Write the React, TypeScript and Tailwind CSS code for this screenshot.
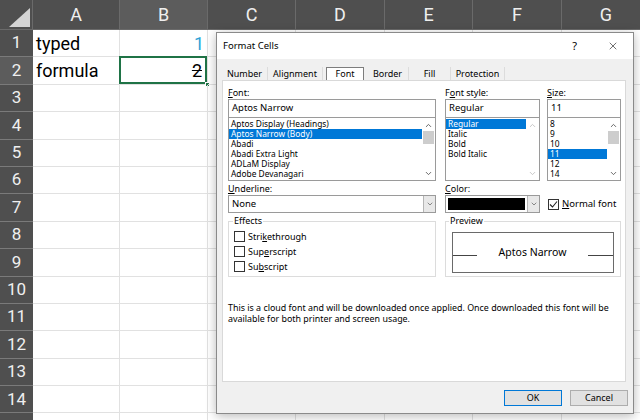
import { ChevronDown, ChevronUp, X } from "lucide-react";

const columns = [
  { letter: "A", width: "w-[87px]" },
  { letter: "B", width: "w-[88px]" },
  { letter: "C", width: "w-[88px]" },
  { letter: "D", width: "w-[89px]" },
  { letter: "E", width: "w-[88px]" },
  { letter: "F", width: "w-[89px]" },
  { letter: "G", width: "w-[89px]" },
];

const rows = Array.from({ length: 15 }, (_, i) => i + 1);

function Sheet() {
  return (
    <div className="flex flex-col font-['Roboto',sans-serif]">
      <div className="flex h-[30px] bg-[#4f4f4f]">
        <div className="relative w-[33px] shrink-0 border-r border-b border-[#6a6a6a]">
          <svg className="absolute left-[9px] top-[8px]" width="21" height="19" viewBox="0 0 21 19">
            <polygon points="21,0 21,19 0,19" fill="#d4d4d4" />
          </svg>
        </div>
        {columns.map((c) => (
          <div
            key={c.letter}
            className={`${c.width} flex shrink-0 items-center justify-center border-r border-b border-[#6a6a6a] text-[18px] text-[#efefef] ${c.letter === "B" ? "bg-[#5c5c5c]" : ""}`}
          >
            {c.letter}
          </div>
        ))}
      </div>
      {rows.map((r) => (
        <div key={r} className="flex h-[27.4px]">
          <div
            className={`flex w-[33px] shrink-0 items-center justify-center border-b border-[#7a7a7a] text-[17px] text-[#efefef] ${r === 2 ? "bg-[#5c5c5c]" : "bg-[#4f4f4f]"}`}
          >
            {r < 15 ? r : ""}
          </div>
          {columns.map((c) => (
            <div
              key={c.letter}
              className={`${c.width} relative flex shrink-0 items-center border-r border-b border-[#e1e1e1] px-[3px] text-[18px] text-black`}
            >
              {r === 1 && c.letter === "A" && <span>typed</span>}
              {r === 2 && c.letter === "A" && <span>formula</span>}
              {r === 1 && c.letter === "B" && <span className="ml-auto text-[#2ea3d6]">1</span>}
              {r === 2 && c.letter === "B" && (
                <>
                  <span className="ml-auto pr-[2px] line-through">2</span>
                  <div className="absolute -left-[1px] -top-[1px] h-[calc(100%+1px)] w-[calc(100%+1px)] border-2 border-[#1f7346]" />
                  <div className="absolute -bottom-[3px] -right-[3px] h-[5px] w-[5px] border border-white bg-[#1f7346]" />
                </>
              )}
            </div>
          ))}
        </div>
      ))}
    </div>
  );
}

function U({ children }: { children: string }) {
  return <span className="underline underline-offset-1">{children}</span>;
}

function Scrollbar({ disabled }: { disabled?: boolean }) {
  const tone = disabled ? "text-[#c4c4c4]" : "text-[#606060]";
  return (
    <div className="flex w-[13px] shrink-0 flex-col items-center bg-white">
      <ChevronUp className={`mt-[3px] h-[9px] w-[9px] ${tone}`} strokeWidth={2.5} />
      {!disabled && <div className="mt-[1px] h-[13px] w-[11px] bg-[#cdcdcd]" />}
      <ChevronDown className={`mb-[2px] mt-auto h-[9px] w-[9px] ${tone}`} strokeWidth={2.5} />
    </div>
  );
}

function ListBox({
  items,
  selected,
  scroll,
  disabled,
}: {
  items: string[];
  selected: string;
  scroll: boolean;
  disabled?: boolean;
}) {
  return (
    <div className="flex h-[63px] border border-t-0 border-[#9a9a9a] bg-white">
      <div className="min-w-0 flex-1 pt-[1px]">
        {items.map((item) => (
          <div
            key={item}
            className={`h-[10px] whitespace-nowrap pl-[2px] text-[8.4px] leading-[10px] ${item === selected ? "bg-[#0078d7] text-white" : ""}`}
          >
            {item}
          </div>
        ))}
      </div>
      {scroll && <Scrollbar disabled={disabled} />}
    </div>
  );
}

function TextBox({ value }: { value: string }) {
  return (
    <div className="flex h-[19px] items-center border border-[#9a9a9a] bg-white pl-[3px] text-[9.5px]">
      {value}
    </div>
  );
}

function CheckBox({ checked }: { checked?: boolean }) {
  return (
    <div className="flex h-[11px] w-[11px] shrink-0 items-center justify-center border border-[#333] bg-white">
      {checked && (
        <svg width="9" height="9" viewBox="0 0 9 9">
          <path d="M1 4.5 L3.5 7 L8 1.5" fill="none" stroke="#222" strokeWidth="1.1" />
        </svg>
      )}
    </div>
  );
}

function DropButton() {
  return (
    <div className="flex w-[12px] shrink-0 items-center justify-center border-l border-[#b5b5b5] bg-[#e8e8e8]">
      <ChevronDown className="h-[8px] w-[8px] text-[#555]" strokeWidth={2} />
    </div>
  );
}

const tabs = [
  { name: "Number", width: "w-[46px]" },
  { name: "Alignment", width: "w-[55px]" },
  { name: "Font", width: "w-[44px]" },
  { name: "Border", width: "w-[42px]" },
  { name: "Fill", width: "w-[42px]" },
  { name: "Protection", width: "w-[54px]" },
];

function FormatCellsDialog() {
  return (
    <div className="absolute left-[216px] top-[32px] flex h-[382px] w-[418px] flex-col border border-[#8a8a8a] bg-[#f0f0f0] font-['Noto_Sans',sans-serif] text-[9px] text-black shadow-[0_2px_10px_rgba(0,0,0,0.28)]">
      <div className="flex h-[26px] shrink-0 items-center bg-white pl-[6px] pr-[14px]">
        <span className="text-[9.5px]">Format Cells</span>
        <span className="ml-auto mr-[30px] text-[11px]">?</span>
        <X className="h-[12px] w-[12px] text-[#222]" strokeWidth={1.3} />
      </div>

      <div className="ml-[5px] mt-[7px] flex h-[14px] w-[404px] items-end">
        {tabs.map((t) =>
          t.name === "Font" ? (
            <div key={t.name} className={`${t.width} flex h-[14px] items-end justify-center`}>
              <div className="-mb-[1px] flex h-[14px] w-[38px] items-center justify-center border border-[#7d7d7d] bg-white pb-[1px]">
                {t.name}
              </div>
            </div>
          ) : (
            <div
              key={t.name}
              className={`${t.width} flex h-[13px] items-center justify-center border-r border-[#dcdcdc] pt-[1px]`}
            >
              {t.name}
            </div>
          ),
        )}
      </div>

      <div className="ml-[5px] flex h-[302px] w-[404px] flex-col border border-[#d9d9d9] bg-white pl-[5px] pt-[6px]">
        <div className="flex">
          <div className="w-[208px]">
            <div className="h-[12px] leading-[11px]">
              <U>F</U>ont:
            </div>
            <TextBox value="Aptos Narrow" />
            <ListBox
              items={[
                "Aptos Display (Headings)",
                "Aptos Narrow (Body)",
                "Abadi",
                "Abadi Extra Light",
                "ADLaM Display",
                "Adobe Devanagari",
              ]}
              selected="Aptos Narrow (Body)"
              scroll
            />
          </div>
          <div className="ml-[9px] w-[95px]">
            <div className="h-[12px] leading-[11px]">
              F<U>o</U>nt style:
            </div>
            <TextBox value="Regular" />
            <ListBox
              items={["Regular", "Italic", "Bold", "Bold Italic"]}
              selected="Regular"
              scroll
              disabled
            />
          </div>
          <div className="ml-[7px] w-[74px]">
            <div className="h-[12px] leading-[11px]">
              <U>S</U>ize:
            </div>
            <TextBox value="11" />
            <ListBox items={["8", "9", "10", "11", "12", "14"]} selected="11" scroll />
          </div>
        </div>

        <div className="mt-[2px] flex items-end">
          <div className="w-[208px]">
            <div className="h-[12px] leading-[11px]">
              <U>U</U>nderline:
            </div>
            <div className="flex h-[18px] border border-[#9a9a9a] bg-white">
              <div className="flex flex-1 items-center pl-[3px] text-[9.5px]">None</div>
              <DropButton />
            </div>
          </div>
          <div className="ml-[9px] w-[95px]">
            <div className="h-[12px] leading-[11px]">
              <U>C</U>olor:
            </div>
            <div className="flex h-[18px] border border-[#9a9a9a] bg-white">
              <div className="flex flex-1 items-center pl-[2px] pr-[2px]">
                <div className="h-[12px] w-full bg-black" />
              </div>
              <DropButton />
            </div>
          </div>
          <div className="ml-[8px] flex h-[18px] items-center gap-[3px] text-[9.5px]">
            <CheckBox checked />
            <span>
              <U>N</U>ormal font
            </span>
          </div>
        </div>

        <div className="mt-[8px] flex">
          <div className="relative h-[56px] w-[208px] border border-[#dcdcdc] pl-[5px] pt-[7px]">
            <span className="absolute -top-[6px] left-[4px] bg-white px-[1px] leading-[10px]">Effects</span>
            <div className="flex h-[15px] items-center gap-[3px]">
              <CheckBox />
              <span>
                Stri<U>k</U>ethrough
              </span>
            </div>
            <div className="flex h-[15px] items-center gap-[3px]">
              <CheckBox />
              <span>
                Sup<U>e</U>rscript
              </span>
            </div>
            <div className="flex h-[15px] items-center gap-[3px]">
              <CheckBox />
              <span>
                Su<U>b</U>script
              </span>
            </div>
          </div>
          <div className="relative ml-[9px] h-[56px] w-[176px] border border-[#dcdcdc] px-[6px] pt-[10px]">
            <span className="absolute -top-[6px] left-[3px] bg-white px-[1px] leading-[10px]">Preview</span>
            <div className="flex h-[41px] items-center border border-[#6a6a6a]">
              <div className="mt-[6px] h-px w-[24px] bg-[#444]" />
              <span className="flex-1 text-center text-[10.5px] leading-[11px]">Aptos Narrow</span>
              <div className="mt-[6px] h-px w-[25px] bg-[#444]" />
            </div>
          </div>
        </div>

        <p className="mt-[25px] text-[8.9px] leading-[11px]">
          This is a cloud font and will be downloaded once applied. Once downloaded this font will be
          <br />
          available for both printer and screen usage.
        </p>
      </div>

      <div className="mr-[5px] mt-[8px] flex justify-end gap-[8px]">
        <div className="flex h-[16px] w-[58px] items-center justify-center border border-[#0078d7] bg-[#e1e1e1]">
          OK
        </div>
        <div className="flex h-[16px] w-[58px] items-center justify-center border border-[#adadad] bg-[#e1e1e1]">
          Cancel
        </div>
      </div>
    </div>
  );
}

export default function App() {
  return (
    <div className="relative h-[420px] w-[640px] overflow-hidden bg-white">
      <Sheet />
      <FormatCellsDialog />
    </div>
  );
}
